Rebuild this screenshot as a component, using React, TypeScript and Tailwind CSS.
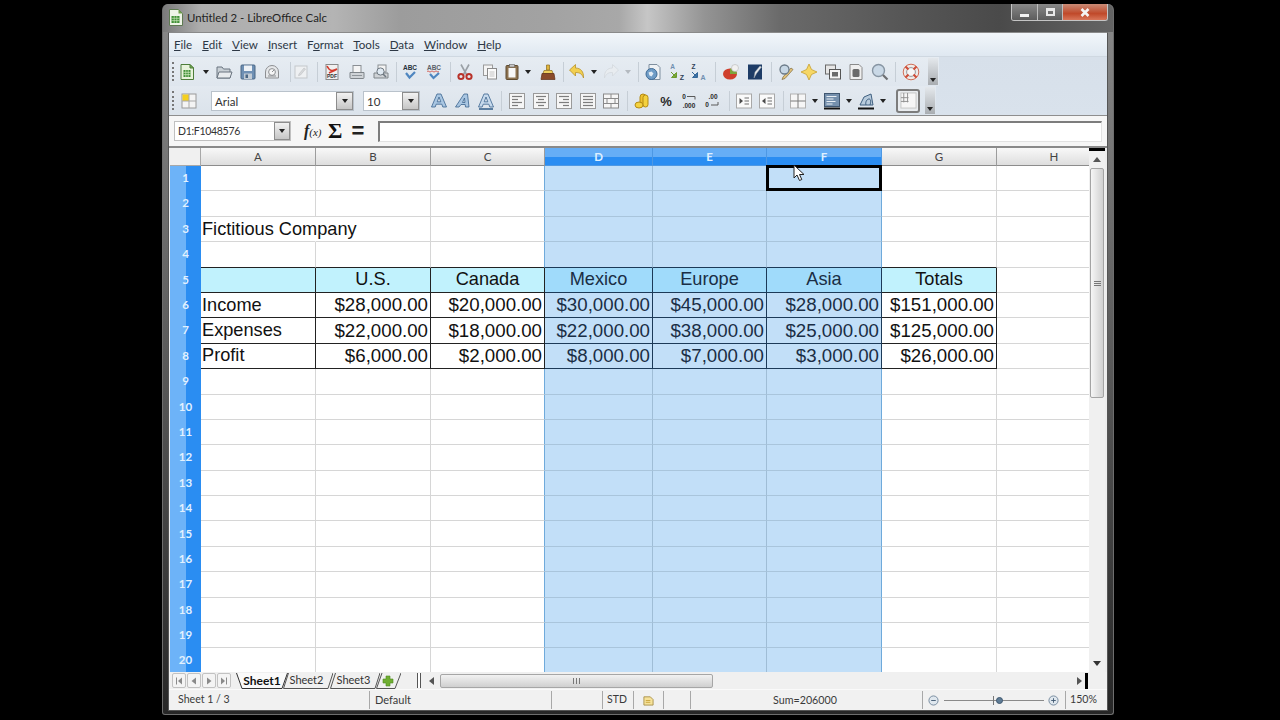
import type { ReactNode } from "react"

const UI = "font-['Lato','Open_Sans',sans-serif]"

// 18px toolbar glyphs
function Ico({ children, className = "" }: { children: ReactNode; className?: string }) {
  return (
    <svg viewBox="0 0 18 18" className={`w-[18px] h-[18px] shrink-0 ${className}`}>
      {children}
    </svg>
  )
}

const CalcDoc = () => (
  <>
    <path d="M3 1.5h9l3.5 3.5v11.5H3z" fill="#e8f3dc" stroke="#4d7d3a" />
    <path d="M12 1.5V5h3.5z" fill="#7db356" stroke="#4d7d3a" />
    <rect x="5.5" y="7" width="7" height="7" fill="#3f8f35" />
    <path d="M5.5 9.3h7M5.5 11.6h7M7.8 7v7M10.2 7v7" stroke="#d7efc6" strokeWidth=".7" />
  </>
)
const New = ({ className }: { className?: string }) => <Ico className={className}><CalcDoc /></Ico>
const Open = ({ className }: { className?: string }) => (
  <Ico className={className}>
    <path d="M2 4h5l1.5 2H15v9H2z" fill="#c9d0d6" stroke="#6a7580" />
    <path d="M2 15l2-6h13l-2 6z" fill="#e8ebee" stroke="#6a7580" />
  </Ico>
)
const Save = ({ className }: { className?: string }) => (
  <Ico className={className}>
    <rect x="2" y="2" width="14" height="14" rx="1" fill="#6f90b4" stroke="#4a6684" />
    <rect x="5" y="2.5" width="8" height="5.5" fill="#eef2f6" />
    <rect x="5" y="10.5" width="8" height="5.5" fill="#c3ccd5" />
    <rect x="6.5" y="11.5" width="2.5" height="3.5" fill="#4a6684" />
  </Ico>
)
const Mail = ({ className }: { className?: string }) => (
  <Ico className={className}>
    <path d="M2.5 15V9a6.5 6.5 0 0 1 13 0v6z" fill="#e6e8ea" stroke="#8d8f92" />
    <circle cx="9" cy="9" r="3.4" fill="#f6f6f6" stroke="#8d8f92" />
    <path d="M9 9l2-2" stroke="#8d8f92" />
    <path d="M5 13h8" stroke="#8d8f92" />
  </Ico>
)
const EditDoc = ({ className }: { className?: string }) => (
  <Ico className={className}>
    <rect x="3" y="3" width="12" height="12" fill="#eef0f2" stroke="#c3c7cb" />
    <path d="M7 11l5-6 1.5 1-5 6-2 .7z" fill="#d8dadc" stroke="#bdbfc2" strokeWidth=".6" />
  </Ico>
)
const Pdf = ({ className }: { className?: string }) => (
  <Ico className={className}>
    <rect x="3" y="1.5" width="12" height="15" fill="#f0f0f0" stroke="#8a8a8a" />
    <path d="M4 3c3 6 6 5 10 3-3 2-6 3-8 4" fill="none" stroke="#d33a2c" strokeWidth="1.6" />
    <text x="9" y="15" textAnchor="middle" fontSize="5" fontWeight="700" fontFamily="Liberation Sans" fill="#333">PDF</text>
  </Ico>
)
const Print = ({ className }: { className?: string }) => (
  <Ico className={className}>
    <rect x="5" y="2.5" width="8" height="7" fill="#f4f4f4" stroke="#8a8f94" />
    <path d="M2 9.5h14v5a1 1 0 0 1-1 1H3a1 1 0 0 1-1-1z" fill="#cfd3d7" stroke="#7f858a" />
    <path d="M4 12.5h10" stroke="#8f959a" />
  </Ico>
)
const Preview = ({ className }: { className?: string }) => (
  <Ico className={className}>
    <rect x="6" y="2" width="8" height="7" fill="#f4f4f4" stroke="#8a8f94" />
    <path d="M2 10h14v5H2z" fill="#cfd3d7" stroke="#7f858a" />
    <circle cx="8.5" cy="8.5" r="3.6" fill="#dfe9f2" stroke="#6d7780" />
    <path d="M11 11l3 3" stroke="#6d7780" strokeWidth="1.6" />
  </Ico>
)
const Spell = ({ className }: { className?: string }) => (
  <Ico className={className}>
    <text x="9" y="7" textAnchor="middle" fontSize="6.5" fontWeight="700" fontFamily="Liberation Sans" fill="#26303a">ABC</text>
    <path d="M5 10l3.5 4.5L14 9" fill="none" stroke="#4f86c0" strokeWidth="2.2" />
  </Ico>
)
const AutoSpell = ({ className }: { className?: string }) => (
  <Ico className={className}>
    <text x="9" y="7" textAnchor="middle" fontSize="6.5" fontWeight="700" fontFamily="Liberation Sans" fill="#5a6068">ABC</text>
    <path d="M2 8.5q1-1.200 2 0t2 0 2 0 2 0 2 0 2 0" fill="none" stroke="#d0453a" strokeWidth=".8" />
    <path d="M5 11l3.500 4L14 10" fill="none" stroke="#4f86c0" strokeWidth="2.2" />
  </Ico>
)
const Cut = ({ className }: { className?: string }) => (
  <Ico className={className}>
    <path d="M5 1.500l5.500 10M13 1.500l-5.500 10" stroke="#9aa0a6" strokeWidth="1.600" />
    <circle cx="5" cy="13.500" r="2.600" fill="none" stroke="#b8322a" strokeWidth="2" />
    <circle cx="13" cy="13.500" r="2.600" fill="none" stroke="#b8322a" strokeWidth="2" />
  </Ico>
)
const Copy = ({ className }: { className?: string }) => (
  <Ico className={className}>
    <rect x="2.500" y="2" width="9" height="10.500" fill="#f4f4f4" stroke="#9a9a9a" />
    <rect x="6.500" y="5.500" width="9" height="10.500" fill="#fbfbfb" stroke="#8a8a8a" />
    <path d="M8.500 9h5M8.500 11h5M8.500 13h5" stroke="#c4c4c4" />
  </Ico>
)
const Paste = ({ className }: { className?: string }) => (
  <Ico className={className}>
    <rect x="3" y="2.500" width="12" height="14" rx="1" fill="#8d7350" stroke="#5f4b30" />
    <rect x="5.500" y="5" width="7" height="9.500" fill="#f7f7f7" />
    <rect x="6.500" y="1.500" width="5" height="2.500" fill="#c9c9c9" stroke="#666" strokeWidth=".6" />
  </Ico>
)
const Brush = ({ className }: { className?: string }) => (
  <Ico className={className}>
    <path d="M7.500 2h3v5h-3z" fill="#e0b53c" stroke="#8b6a1c" strokeWidth=".7" />
    <path d="M5 7.500h8l1 3H4z" fill="#f0cf5c" stroke="#8b6a1c" strokeWidth=".7" />
    <path d="M3 10.500h12l1 6H2z" fill="#8a4a2a" stroke="#5e2f18" strokeWidth=".7" />
  </Ico>
)
const Undo = ({ className }: { className?: string }) => (
  <Ico className={className}>
    <path d="M1.500 7L7.500 1.500V5c5 0 8.500 3.500 8 10-1.500-4-3.500-5.500-8-5.500v3.500z" fill="#f2cf4f" stroke="#b8922a" strokeWidth=".8" />
  </Ico>
)
const Redo = ({ className }: { className?: string }) => (
  <Ico className={className}>
    <path d="M16.500 7L10.500 1.500V5c-5 0-8.500 3.500-8 10 1.500-4 3.500-5.500 8-5.500v3.500z" fill="#e8ecf0" stroke="#d3d8dd" strokeWidth=".8" />
  </Ico>
)
const Link = ({ className }: { className?: string }) => (
  <Ico className={className}>
    <path d="M5 1.500h8l3 3v12H5z" fill="#eef1f4" stroke="#7f8f9f" />
    <circle cx="7.500" cy="11" r="5.500" fill="#6f9cc6" stroke="#3f6b96" />
    <path d="M4.500 9.500l3-1 2 2-2 3-2-1z" fill="#e4edf5" />
  </Ico>
)
const SortAZ = ({ className }: { className?: string }) => (
  <Ico className={className}>
    <text x="4.500" y="6" fontSize="6.500" fontWeight="700" fontFamily="Liberation Sans" fill="#6f8fb0" textAnchor="middle">A</text>
    <text x="14" y="16.500" fontSize="7" fontWeight="700" fontFamily="Liberation Sans" fill="#2f4258" textAnchor="middle">Z</text>
    <path d="M3 9l5 5M8.500 9.500v5h-5z" fill="#7fae3c" stroke="#6c9b2f" />
  </Ico>
)
const SortZA = ({ className }: { className?: string }) => (
  <Ico className={className}>
    <text x="4.500" y="6" fontSize="6.500" fontWeight="700" fontFamily="Liberation Sans" fill="#2f4258" textAnchor="middle">Z</text>
    <text x="14" y="16.500" fontSize="7" fontWeight="700" fontFamily="Liberation Sans" fill="#6f8fb0" textAnchor="middle">A</text>
    <path d="M3 9l5 5M8.500 9.500v5h-5z" fill="#3f75a8" stroke="#35689a" />
  </Ico>
)
const Chart = ({ className }: { className?: string }) => (
  <Ico className={className}>
    <ellipse cx="8" cy="11" rx="7" ry="5.500" fill="#cf3f2c" />
    <path d="M8 11V5.500a7 5.500 0 0 1 7 5.500z" fill="#7da63c" />
    <circle cx="13" cy="5" r="3.500" fill="#f1f1f1" stroke="#b5b5b5" strokeWidth=".6" />
  </Ico>
)
const Pivot = ({ className }: { className?: string }) => (
  <Ico className={className}>
    <path d="M2 1.500h14v15H2z" fill="#1d3c66" />
    <path d="M8 15l1-6 5-6 1.500 1-5 6.500z" fill="#e8ebee" stroke="#9aa4ad" strokeWidth=".5" />
  </Ico>
)
const Find = ({ className }: { className?: string }) => (
  <Ico className={className}>
    <path d="M6 14l8-9 2 1.500-8 9-3 1z" fill="#e3c27a" stroke="#7d6a3d" strokeWidth=".7" />
    <circle cx="7.500" cy="6.500" r="4.500" fill="#c7d7e5" stroke="#6b7a88" strokeWidth="1.300" />
  </Ico>
)
const Star = ({ className }: { className?: string }) => (
  <Ico className={className}>
    <path d="M9 1l2.500 5.500L17 9l-5.500 2.500L9 17l-2.500-5.500L1 9l5.500-2.500z" fill="#f6d765" stroke="#c69f2f" strokeWidth=".8" />
  </Ico>
)
const Windows = ({ className }: { className?: string }) => (
  <Ico className={className}>
    <rect x="1.500" y="2" width="10" height="9" fill="#e6e6e6" stroke="#6a6a6a" />
    <rect x="5.500" y="6.500" width="11" height="9.500" fill="#f5f5f5" stroke="#555" />
    <rect x="8" y="9" width="6" height="4.500" fill="#6b6b6b" />
  </Ico>
)
const DbDoc = ({ className }: { className?: string }) => (
  <Ico className={className}>
    <path d="M3 1.500h9l3 3v12H3z" fill="#efefef" stroke="#8a8a8a" />
    <rect x="5.500" y="6" width="7" height="8" rx="1.500" fill="#6a6a6a" />
  </Ico>
)
const Zoom = ({ className }: { className?: string }) => (
  <Ico className={className}>
    <circle cx="7.500" cy="7.500" r="6" fill="#c9d8e6" stroke="#8795a3" strokeWidth="1.400" />
    <path d="M12 12l4.500 4.500" stroke="#6d6f72" strokeWidth="2.200" />
  </Ico>
)
const Help = ({ className }: { className?: string }) => (
  <Ico className={className}>
    <circle cx="9" cy="9" r="7" fill="none" stroke="#f1ece8" strokeWidth="3" />
    <circle cx="9" cy="9" r="7.800" fill="none" stroke="#c9604a" strokeWidth=".9" />
    <circle cx="9" cy="9" r="4.400" fill="#f6f6f6" stroke="#9a9a9a" />
    <path d="M3.500 3.500l3 3M14.500 3.500l-3 3M3.500 14.500l3-3M14.500 14.500l-3-3" stroke="#cf4f3a" strokeWidth="2.200" />
  </Ico>
)
const Styles = ({ className }: { className?: string }) => (
  <Ico className={className}>
    <rect x="2" y="2" width="14" height="14" fill="#f4f4f4" stroke="#9a9a9a" />
    <rect x="2.500" y="2.500" width="6.500" height="6.500" fill="#f4cf1f" />
    <path d="M9 2v14M2 9h14" stroke="#a8a8a8" />
  </Ico>
)
const LetterA = ({ fill, italic, under }: { fill: string; italic?: boolean; under?: boolean }) => (
  <>
    <path
      d={italic ? "M1.500 15L10 2h3.500L15 15h-3.500l-.3-2.500H7L5 15zM8.500 10.500h2.500l-.5-4.500z" : "M1.500 15L7 2h4l5.500 13h-3.700l-1-2.800H6.200l-1 2.800zM7.200 9.800h3.600L9 5z"}
      fill={fill}
      stroke="#3a638e"
      strokeWidth=".8"
      fillRule="evenodd"
    />
    {under && <path d="M2 17h14" stroke="#3a638e" strokeWidth="1.600" />}
  </>
)
const Bold = ({ className }: { className?: string }) => <Ico className={className}><LetterA fill="#a9c6e2" /></Ico>
const Italic = ({ className }: { className?: string }) => <Ico className={className}><LetterA fill="#a9c6e2" italic /></Ico>
const Under = ({ className }: { className?: string }) => <Ico className={className}><LetterA fill="#c6d9ec" under /></Ico>

function Lines({ ys, className }: { ys: [number, number][]; className?: string }) {
  return (
    <Ico className={className}>
      <rect x="1.500" y="1.500" width="15" height="15" fill="#f6f6f6" stroke="#9a9a9a" />
      {ys.map(([a, b], i) => (
        <path key={i} d={`M${a} ${4.5 + i * 3}H${b}`} stroke="#7d7d7d" strokeWidth="1.200" />
      ))}
    </Ico>
  )
}
const AlignL = ({ className }: { className?: string }) => <Lines className={className} ys={[[4, 14], [4, 10], [4, 14], [4, 10]]} />
const AlignC = ({ className }: { className?: string }) => <Lines className={className} ys={[[4, 14], [6, 12], [4, 14], [6, 12]]} />
const AlignR = ({ className }: { className?: string }) => <Lines className={className} ys={[[4, 14], [8, 14], [4, 14], [8, 14]]} />
const AlignJ = ({ className }: { className?: string }) => <Lines className={className} ys={[[4, 14], [4, 14], [4, 14], [4, 14]]} />
const Merge = ({ className }: { className?: string }) => (
  <Ico className={className}>
    <rect x="1.500" y="2" width="15" height="14" fill="#f6f6f6" stroke="#8a8a8a" />
    <path d="M1.500 6.500h15M1.500 11.500h15M9 2v4.500M9 11.500V16M5 6.500v5M13 6.500v5" stroke="#8a8a8a" />
  </Ico>
)
const Currency = ({ className }: { className?: string }) => (
  <Ico className={className}>
    <rect x="7" y="2" width="6" height="12" rx="3" fill="#eec22f" stroke="#b48b14" />
    <rect x="10" y="3" width="5" height="12" rx="2.500" fill="#f4d23f" stroke="#b48b14" />
    <ellipse cx="6" cy="13" rx="4" ry="3" fill="#f4d23f" stroke="#b48b14" />
  </Ico>
)
const Percent = ({ className }: { className?: string }) => (
  <Ico className={className}>
    <text x="9" y="14" textAnchor="middle" fontSize="13" fontWeight="700" fontFamily="Liberation Sans" fill="#2a2a2a">%</text>
  </Ico>
)
const Decimal = ({ className }: { className?: string }) => (
  <Ico className={className}>
    <text x="4" y="7" fontSize="6.500" fontWeight="700" fontFamily="Liberation Sans" fill="#2a2a2a" textAnchor="middle">0</text>
    <path d="M7 4.500h8v3" fill="none" stroke="#5a5a5a" />
    <text x="9" y="16" fontSize="6.500" fontWeight="700" fontFamily="Liberation Sans" fill="#2a2a2a" textAnchor="middle">.000</text>
  </Ico>
)
const DecimalDel = ({ className }: { className?: string }) => (
  <Ico className={className}>
    <text x="10" y="7" fontSize="6.500" fontWeight="700" fontFamily="Liberation Sans" fill="#2a2a2a" textAnchor="middle">.00</text>
    <text x="4" y="15" fontSize="6.500" fontWeight="700" fontFamily="Liberation Sans" fill="#2a2a2a" textAnchor="middle">0</text>
    <path d="M8 13h7v-3" fill="none" stroke="#5a5a5a" />
  </Ico>
)
const IndentL = ({ className }: { className?: string }) => (
  <Ico className={className}>
    <rect x="1.500" y="2" width="15" height="14" fill="#fafafa" stroke="#a8a8a8" />
    <path d="M8 9l-3.500-3v6z" fill="#4b4b4b" />
    <path d="M9.500 6h4.500M9.500 9h4.500M9.500 12h4.500" stroke="#6f6f6f" />
  </Ico>
)
const IndentR = ({ className }: { className?: string }) => (
  <Ico className={className}>
    <rect x="1.500" y="2" width="15" height="14" fill="#fafafa" stroke="#a8a8a8" />
    <path d="M4 9l3.500-3v6z" fill="#4b4b4b" />
    <path d="M9.500 6h4.500M9.500 9h4.500M9.500 12h4.500" stroke="#6f6f6f" />
  </Ico>
)
const Borders = ({ className }: { className?: string }) => (
  <Ico className={className}>
    <rect x="1.500" y="2" width="15" height="14" fill="#f6f6f6" stroke="#b2b2b2" />
    <path d="M9 2v14M1.500 9h15" stroke="#7a7a7a" />
  </Ico>
)
const LineColor = ({ className }: { className?: string }) => (
  <Ico className={className}>
    <rect x="1.500" y="1.500" width="15" height="13" fill="#7590ad" stroke="#3f5670" />
    <path d="M3.500 4.500h10M3.500 7h7M3.500 9.500h9M3.500 12h6" stroke="#e8eef4" />
    <path d="M1 16.500h16" stroke="#111" strokeWidth="2" />
  </Ico>
)
const BgColor = ({ className }: { className?: string }) => (
  <Ico className={className}>
    <path d="M3 13l4-8 7-3 2 11z" fill="#b8cbdc" stroke="#3f5f80" />
    <path d="M9 13c-1-3 1-6 3-6s2 3 1 6" fill="none" stroke="#3f5f80" />
    <path d="M1 16.500h16" stroke="#111" strokeWidth="2" />
  </Ico>
)

const Arrow = ({ className = "" }: { className?: string }) => (
  <svg viewBox="0 0 6 4" className={`w-[6px] h-[4px] shrink-0 ${className}`}>
    <path d="M0 0h6L3 4z" fill="#222" />
  </svg>
)
const ArrowFaint = ({ className = "" }: { className?: string }) => (
  <svg viewBox="0 0 6 4" className={`w-[6px] h-[4px] shrink-0 ${className}`}>
    <path d="M0 0h6L3 4z" fill="#b4bac0" />
  </svg>
)
const Sep = ({ className = "" }: { className?: string }) => <div className={`w-px h-[20px] shrink-0 bg-[#c6ced6] ${className}`} />

function Grip() {
  return <div className="w-[2px] h-[19px] ml-[2px] shrink-0 border-l-2 border-dotted border-[#777]" />
}
function EndHandle({ className = "" }: { className?: string }) {
  return (
    <div className={`w-[10px] h-[27px] shrink-0 flex items-end justify-center pb-[3px] bg-[linear-gradient(to_bottom,#e4e8ec,#a9adb1)] ${className}`}>
      <Arrow />
    </div>
  )
}

function Combo({ text, className, textClass = "text-[11.5px]", arrowClass = "w-[17px]" }: { text: string; className: string; textClass?: string; arrowClass?: string }) {
  return (
    <div className={`flex items-stretch bg-white border border-[#b9c2cb] shrink-0 ${className}`}>
      <span className={`flex-1 pl-[3px] leading-[19px] text-[#333] whitespace-nowrap ${textClass}`}>{text}</span>
      <span className={`${arrowClass} flex items-center justify-center border border-[#8d8d8d] bg-[linear-gradient(to_bottom,#f2f2f2,#c6c6c6)]`}>
        <Arrow />
      </span>
    </div>
  )
}

const COLS = ["A", "B", "C", "D", "E", "F", "G", "H"]
const TABLE: Record<number, string[]> = {
  5: ["", "U.S.", "Canada", "Mexico", "Europe", "Asia", "Totals"],
  6: ["Income", "$28,000.00", "$20,000.00", "$30,000.00", "$45,000.00", "$28,000.00", "$151,000.00"],
  7: ["Expenses", "$22,000.00", "$18,000.00", "$22,000.00", "$38,000.00", "$25,000.00", "$125,000.00"],
  8: ["Profit", "$6,000.00", "$2,000.00", "$8,000.00", "$7,000.00", "$3,000.00", "$26,000.00"],
}

function Cell({ row, col }: { row: number; col: number }) {
  const sel = col >= 3 && col <= 5
  const inTable = row >= 5 && row <= 8 && col <= 6
  const title = row === 3 && col === 0
  const numeric = row >= 6 && row <= 8 && col > 0 && col <= 6
  const text = title ? "Fictitious Company" : inTable ? TABLE[row][col] : ""

  if (row === 1 && col === 5) {
    return <div className="bg-[#c2dff8] border-[3px] border-black -mt-px -ml-px z-10" />
  }

  let bg = "bg-white"
  if (row === 5 && col <= 6) bg = sel ? "bg-[#a0dbfb]" : "bg-[#c1f2fd]"
  else if (sel) bg = "bg-[#c2dff8]"

  // right and bottom lines
  let right = "border-r-[#d6d6d6]"
  if (sel) right = "border-r-[#9fbdd6]"
  if (col === 2 || col === 5) right = "border-r-[#6faadb]"
  if (inTable) right = sel ? "border-r-[#1c3a58]" : "border-r-[#222]"
  if (title) right = "border-r-transparent"

  let bottom = sel ? "border-b-[#a9c5dc]" : "border-b-[#d6d6d6]"
  if (row >= 4 && row <= 8 && col <= 6) bottom = sel ? "border-b-[#1c3a58]" : "border-b-[#222]"

  let align = "justify-start pl-[1px]"
  if (row === 5) align = "justify-center"
  if (numeric) align = "justify-end pr-[2px]"

  return (
    <div
      className={`flex items-center border-r border-b whitespace-nowrap font-['Liberation_Sans',Arial,sans-serif] ${numeric ? "text-[18.7px]" : "text-[18.2px]"} ${bg} ${right} ${bottom} ${align} ${
        sel ? "text-[#1a2e45]" : "text-[#111]"
      } ${title ? "relative z-10 pt-[1px]" : ""}`}
    >
      {text}
    </div>
  )
}

function Sheet() {
  const rows = Array.from({ length: 20 }, (_, i) => i + 1)
  return (
    <div className="relative w-[919px] h-[524px] overflow-hidden grid grid-cols-[31px_115px_115px_114px_108px_114px_115px_115px_115px] grid-rows-[18px] auto-rows-[25.4px]">
      <div className="bg-[#f0f0f0] border-r border-b border-[#a8a8a8]" />
      {COLS.map((c, i) => {
        const sel = i >= 3 && i <= 5
        return (
          <div
            key={c}
            className={`flex items-center justify-center text-[11.5px] border-r border-b ${
              sel
                ? "bg-[linear-gradient(to_bottom,#66aef6_55%,#2a8df2_55%)] border-[#4d98e4] text-[#dff0ff] font-bold"
                : "bg-[linear-gradient(to_bottom,#f8f8f8,#dedede)] border-r-[#9c9c9c] border-b-[#8c8c8c] text-[#444]"
            }`}
          >
            {c}
          </div>
        )
      })}
      {rows.map((r) => (
        <div key={r} className="contents">
          <div className="flex items-center justify-center pb-[2px] text-[11.5px] font-bold text-[#e2f1ff] bg-[linear-gradient(to_right,#6db3f8_50%,#2a8df2_50%)]">
            {r}
          </div>
          {COLS.map((_, c) => (
            <Cell key={c} row={r} col={c} />
          ))}
        </div>
      ))}
      {/* mouse pointer */}
      <svg viewBox="0 0 12 18" className="absolute left-[623px] top-[16px] w-[12px] h-[18px] z-20">
        <path d="M1 1v13l3-3 2.500 5.500 2.300-1L6.500 10.500H11z" fill="#fff" stroke="#222" strokeWidth="1" />
      </svg>
    </div>
  )
}

function VScroll() {
  return (
    <div className="w-[16px] h-[524px] flex flex-col items-center bg-[#f0f0f0]">
      <div className="w-full h-[3px] bg-black shrink-0" />
      <svg viewBox="0 0 8 5" className="w-[8px] h-[5px] mt-[6px] shrink-0">
        <path d="M4 0l4 5H0z" fill="#555" />
      </svg>
      <div className="w-[14px] h-[230px] mt-[6px] shrink-0 rounded-[2px] border border-[#a4a4a4] flex items-center justify-center bg-[linear-gradient(to_right,#f6f6f6,#d0d0d0)]">
        <div className="w-[7px] h-[5px] border-y border-[#777] relative">
          <div className="h-px mt-px bg-[#777]" />
        </div>
      </div>
      <svg viewBox="0 0 8 5" className="w-[8px] h-[5px] mt-auto mb-[6px] shrink-0">
        <path d="M0 0h8L4 5z" fill="#333" />
      </svg>
    </div>
  )
}

function NavBtn({ d, bar }: { d: string; bar?: string }) {
  return (
    <div className="w-[14px] h-[15px] rounded-[2px] border border-[#c2c2c2] bg-[#f4f4f4] flex items-center justify-center">
      <svg viewBox="0 0 8 8" className="w-[8px] h-[8px]">
        <path d={d} fill="#8a8a8a" />
        {bar && <path d={bar} stroke="#8a8a8a" />}
      </svg>
    </div>
  )
}

function Bottom() {
  return (
    <div className="h-[17px] flex items-center bg-[#f0f0f0] text-[#333] text-[11px]">
      <div className="flex ml-[3px] gap-px">
        <NavBtn d="M7 0.500v7L3 4z" bar="M1.500 0.500v7" />
        <NavBtn d="M6 0.500v7L1.500 4z" />
        <NavBtn d="M2 0.500v7L6.500 4z" />
        <NavBtn d="M1 0.500v7L5 4z" bar="M6.500 0.500v7" />
      </div>
      <div className="relative w-[52px] h-[16px] ml-[5px] flex items-center justify-center text-[12px] font-bold text-[#111]">
        <svg viewBox="0 0 52 16" className="absolute inset-0 w-full h-full">
          <path d="M0.500 0L6 15.500H46L51.500 0" fill="#fafafa" stroke="#333" />
        </svg>
        <span className="relative">Sheet1</span>
      </div>
      <div className="relative w-[50px] h-[16px] -ml-[5px] flex items-center justify-center pr-[3px]">
        <svg viewBox="0 0 50 16" className="absolute inset-0 w-full h-full">
          <path d="M5.500 0L0.500 15.500H45L50 0" fill="none" stroke="#555" />
        </svg>
        <span className="relative">Sheet2</span>
      </div>
      <div className="relative w-[50px] h-[16px] -ml-[3px] flex items-center justify-center pr-[3px]">
        <svg viewBox="0 0 50 16" className="absolute inset-0 w-full h-full">
          <path d="M5.500 0L0.500 15.500H45L50 0" fill="none" stroke="#555" />
        </svg>
        <span className="relative">Sheet3</span>
      </div>
      <svg viewBox="0 0 25 16" className="w-[25px] h-[16px] -ml-[4px] shrink-0">
        <path d="M6 0L0.500 15.500H19L25 0" fill="none" stroke="#555" />
        <path d="M10 3h4v3h3v4h-3v3h-4v-3H7V6h3z" fill="#6fae32" stroke="#4d8a1f" strokeWidth=".6" />
      </svg>
      <div className="w-[4px] h-[15px] ml-[16px] border-x border-[#555] bg-white shrink-0" />
      <svg viewBox="0 0 5 8" className="w-[5px] h-[8px] ml-[8px] shrink-0">
        <path d="M5 0v8L0 4z" fill="#555" />
      </svg>
      <div className="w-[273px] h-[14px] ml-[6px] shrink-0 rounded-[2px] border border-[#a6a6a6] flex items-center justify-center bg-[linear-gradient(to_bottom,#f2f2f2,#cfcfcf)]">
        <div className="w-[7px] h-[6px] border-x border-[#777] flex justify-center">
          <div className="w-px h-full bg-[#777]" />
        </div>
      </div>
      <svg viewBox="0 0 5 8" className="w-[5px] h-[8px] ml-auto shrink-0">
        <path d="M0 0v8l5-4z" fill="#555" />
      </svg>
      <div className="w-[3px] h-[16px] bg-black ml-[3px] mr-[19px] shrink-0" />
    </div>
  )
}

function StatusBar() {
  const cell = "h-[18px] flex items-center border-r border-[#a8a8a8] shrink-0"
  return (
    <div className="h-[21px] flex items-center bg-[#f1f1f1] text-[11px] text-[#3a3a3a] border-t border-[#fafafa]">
      <div className={`${cell} w-[201px] pl-[9px] text-[10.6px]`}>Sheet 1 / 3</div>
      <div className={`${cell} w-[182px] pl-[5px]`}>Default</div>
      <div className={`${cell} w-[51px]`} />
      <div className={`${cell} w-[31px] pl-[4px] text-[10.5px]`}>STD</div>
      <div className={`${cell} w-[30px] justify-center`}>
        <svg viewBox="0 0 12 12" className="w-[11px] h-[11px]">
          <path d="M1 2h7l3 3v6H1z" fill="#f6e29a" stroke="#a8914a" />
          <path d="M3 6h5M3 8h5" stroke="#c9a53c" />
        </svg>
      </div>
      <div className={`${cell} w-[27px]`} />
      <div className="flex-1 flex justify-center pr-[3px] text-[10.7px] text-[#3a3a3a]">Sum=206000</div>
      <div className="h-[18px] w-[144px] flex items-center border-l border-r border-[#a8a8a8] shrink-0 relative">
        <svg viewBox="0 0 12 12" className="w-[11px] h-[11px] ml-[5px] shrink-0">
          <circle cx="6" cy="6" r="5" fill="#dfe7ee" stroke="#71869a" />
          <path d="M3.500 6h5" stroke="#3f5870" />
        </svg>
        <div className="relative w-[100px] h-px ml-[5px] bg-[#8a8a8a] shrink-0">
          <div className="absolute left-[49px] -top-[4px] w-px h-[9px] bg-[#777]" />
          <div className="absolute left-[52px] -top-[3px] w-[7px] h-[7px] rounded-full bg-[#5f7c96] border border-[#3f5870]" />
        </div>
        <svg viewBox="0 0 12 12" className="w-[11px] h-[11px] ml-[4px] shrink-0">
          <circle cx="6" cy="6" r="5" fill="#dfe7ee" stroke="#71869a" />
          <path d="M3.500 6h5M6 3.500v5" stroke="#3f5870" />
        </svg>
      </div>
      <div className="w-[41px] pl-[4px] shrink-0 text-[10.6px]">150%</div>
    </div>
  )
}

function Titlebar() {
  return (
    <div className="h-[28px] flex justify-between rounded-t-[6px] bg-[linear-gradient(to_right,#7a7a7a_0%,#aeaeae_4%,#b4b4b4_18%,#9c9c9c_25%,#a2a2a2_40%,#a8a8a8_48%,#c6c6c6_51%,#949494_57%,#6a6a6a_65%,#565656_78%,#4a4a4a_88%,#646464_100%)]">
      <div className="flex items-center pl-[5px] pb-[1px] gap-[4px]">
        <svg viewBox="0 0 15 17" className="w-[15px] h-[17px]">
          <path d="M1.500.500h9l4 4v12h-13z" fill="#eef4e6" stroke="#5e7a52" />
          <path d="M10.500.500v4h4z" fill="#6fa14a" />
          <rect x="3.500" y="7" width="8" height="7" fill="#3f8f35" />
          <path d="M3.500 9.300h8M3.500 11.600h8M6.200 7v7M8.800 7v7" stroke="#d7efc6" strokeWidth=".6" />
        </svg>
        <span className="text-[11.4px] text-[#222]">Untitled 2 - LibreOffice Calc</span>
      </div>
      <div className="flex h-[17px] mr-[5px] rounded-b-[3px] border border-t-0 border-[#c4c4c4] overflow-hidden">
        <div className="w-[26px] flex items-end justify-center pb-[3px] border-r border-[#bdbdbd] bg-[linear-gradient(to_bottom,#888,#5c5c5c)]">
          <div className="w-[9px] h-[3px] bg-[#f2f2f2]" />
        </div>
        <div className="w-[25px] flex items-center justify-center border-r border-[#bdbdbd] bg-[linear-gradient(to_bottom,#888,#5c5c5c)]">
          <div className="w-[9px] h-[8px] border-2 border-t-[3px] border-[#e8e8e8]" />
        </div>
        <div className="w-[44px] flex items-center justify-center bg-[linear-gradient(to_bottom,#c98b76,#c0492a_60%,#d8765a)]">
          <svg viewBox="0 0 10 9" className="w-[10px] h-[9px]">
            <path d="M1.500 1L8.500 8M8.500 1L1.500 8" stroke="#f4f4f4" strokeWidth="2.600" />
          </svg>
        </div>
      </div>
    </div>
  )
}

const MENU = [
  { pre: "", u: "F", post: "ile" },
  { pre: "", u: "E", post: "dit" },
  { pre: "", u: "V", post: "iew" },
  { pre: "", u: "I", post: "nsert" },
  { pre: "F", u: "o", post: "rmat" },
  { pre: "", u: "T", post: "ools" },
  { pre: "", u: "D", post: "ata" },
  { pre: "", u: "W", post: "indow" },
  { pre: "", u: "H", post: "elp" },
]

export default function App() {
  return (
    <div className={`w-[1280px] h-[720px] bg-black overflow-hidden pl-[162px] pt-[4px] ${UI}`}>
      <div className="w-[952px] h-[711px] flex flex-col rounded-t-[6px] rounded-b-[3px] border-x border-b border-[#6e6e6e] bg-[linear-gradient(to_bottom,#8a8a8a,#5a5a5a_50%,#272727)]">
        <Titlebar />
        <div className="mx-[5px] w-[940px] flex flex-col border border-[#555] border-t-[#8a8a8a] bg-[#f0f0f0]">
          {/* menu */}
          <div className="h-[24px] flex items-center pl-[5px] gap-[10px] bg-[linear-gradient(to_bottom,#f2f6fa,#dfe8f1)] border-b border-[#cfd8e1] text-[11.6px] text-[#2d3845]">
            {MENU.map((m) => (
              <span key={m.u + m.post}>
                {m.pre}
                <u>{m.u}</u>
                {m.post}
              </span>
            ))}
          </div>

          {/* toolbars */}
          <div className="bg-[linear-gradient(to_bottom,#d7e0ea,#d9e2ec)]">
            <div className="h-[29px] w-[770px] flex items-center bg-[linear-gradient(to_bottom,#e6ecf2,#dfe6ee)] pl-[1px]">
              <Grip />
              <New className="ml-[4px]" />
              <Arrow className="ml-[7px]" />
              <Open className="ml-[6px]" />
              <Save className="ml-[6px]" />
              <Mail className="ml-[6px]" />
              <Sep className="ml-[9px]" />
              <EditDoc className="ml-[1px]" />
              <Sep className="ml-[7px]" />
              <Pdf className="ml-[5px]" />
              <Print className="ml-[7px]" />
              <Preview className="ml-[6px]" />
              <Sep className="ml-[6px]" />
              <Spell className="ml-[4px]" />
              <AutoSpell className="ml-[6px]" />
              <Sep className="ml-[7px]" />
              <Cut className="ml-[5px]" />
              <Copy className="ml-[7px]" />
              <Paste className="ml-[4px]" />
              <Arrow className="ml-[4px]" />
              <Brush className="ml-[8px]" />
              <Sep className="ml-[6px]" />
              <Undo className="ml-[4px]" />
              <Arrow className="ml-[5px]" />
              <Redo className="ml-[5px]" />
              <ArrowFaint className="ml-[5px]" />
              <Sep className="ml-[7px]" />
              <Link className="ml-[5px]" />
              <SortAZ className="ml-[6px]" />
              <SortZA className="ml-[3px]" />
              <Sep className="ml-[8px]" />
              <Chart className="ml-[6px]" />
              <Pivot className="ml-[6px]" />
              <Sep className="ml-[7px]" />
              <Find className="ml-[5px]" />
              <Star className="ml-[5px]" />
              <Windows className="ml-[6px]" />
              <DbDoc className="ml-[5px]" />
              <Zoom className="ml-[6px]" />
              <Sep className="ml-[6px]" />
              <Help className="ml-[6px]" />
              <EndHandle className="ml-[8px]" />
            </div>
            <div className="h-[29px] w-[767px] flex items-center bg-[linear-gradient(to_bottom,#e3e9f0,#dbe3eb)] pl-[1px]">
              <Grip />
              <Styles className="ml-[6px]" />
              <Combo text="Arial" className="ml-[13px] w-[143px] h-[20px]" />
              <Combo text="10" className="ml-[9px] w-[57px] h-[20px]" />
              <Bold className="ml-[10px]" />
              <Italic className="ml-[6px]" />
              <Under className="ml-[5px]" />
              <Sep className="ml-[6px]" />
              <AlignL className="ml-[6px]" />
              <AlignC className="ml-[6px]" />
              <AlignR className="ml-[5px]" />
              <AlignJ className="ml-[6px]" />
              <Merge className="ml-[5px]" />
              <Sep className="ml-[7px]" />
              <Currency className="ml-[5px]" />
              <Percent className="ml-[6px]" />
              <Decimal className="ml-[5px]" />
              <DecimalDel className="ml-[5px]" />
              <Sep className="ml-[8px]" />
              <IndentL className="ml-[5px]" />
              <IndentR className="ml-[5px]" />
              <Sep className="ml-[7px]" />
              <Borders className="ml-[5px]" />
              <Arrow className="ml-[5px]" />
              <LineColor className="ml-[5px]" />
              <Arrow className="ml-[5px]" />
              <BgColor className="ml-[5px]" />
              <Arrow className="ml-[5px]" />
              <div className="ml-[10px] w-[24px] h-[24px] shrink-0 rounded-[3px] border-2 border-[#7c7c7c] bg-[#e9ecef] flex items-center justify-center">
                <svg viewBox="0 0 18 18" className="w-[17px] h-[17px]">
                  <rect x="1" y="1" width="16" height="16" fill="#f6f6f6" stroke="#c4c4c4" />
                  <path d="M1 6h8M1 10h8M4 1v10M8 1v10" stroke="#8f8f8f" />
                </svg>
              </div>
              <EndHandle className="ml-[5px]" />
            </div>
          </div>

          {/* formula bar */}
          <div className="h-[33px] flex items-center border-t border-[#8e8e8e] border-b-2 border-b-[#8a8a8a] bg-[#f6f6f6]">
            <Combo
              text="D1:F1048576"
              className="ml-[5px] w-[117px] h-[20px] border-[#c0c0c0]"
              textClass="text-[10.5px] tracking-[-0.3px]"
              arrowClass="w-[16px]"
            />
            <span className="ml-[13px] w-[20px] font-['Liberation_Serif',serif] italic font-bold text-[16px] leading-none text-[#222] whitespace-nowrap">
              f<span className="text-[11px] font-normal">(x)</span>
            </span>
            <span className="ml-[4px] font-['Liberation_Serif',serif] font-bold text-[22px] leading-none text-[#111]">Σ</span>
            <span className="ml-[9px] font-['Liberation_Sans',sans-serif] font-bold text-[22px] leading-none text-[#222]">=</span>
            <div className="ml-[14px] w-[724px] h-[21px] bg-white border-t-2 border-l-2 border-[#7d7d7d] border-r border-b border-r-[#e2e2e2] border-b-[#e2e2e2]" />
          </div>

          {/* sheet */}
          <div className="flex pl-[1px] bg-[#ededed]">
            <Sheet />
            <VScroll />
          </div>

          <Bottom />
          <StatusBar />
        </div>
      </div>
    </div>
  )
}
